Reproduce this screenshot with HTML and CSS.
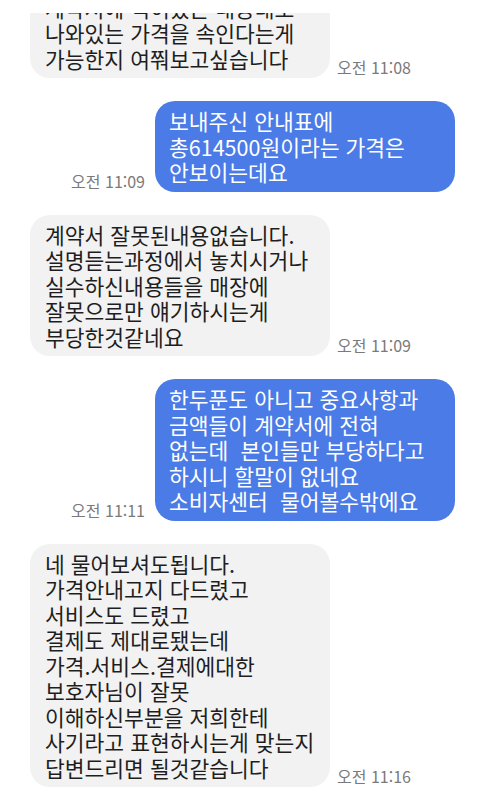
FILE: index.html
```html
<!DOCTYPE html>
<html lang="ko">
<head>
    <meta charset="UTF-8">
    <meta name="viewport" content="width=device-width, initial-scale=1.0">
    <title>메시지</title>
    <link rel="stylesheet" href="styles.css">
</head>
<body>
    <div class="topbar"></div>

    <div class="chat">
        <div class="list">
            <div class="row in">
                <div class="bubble">게시되어있는 사이트 메뉴에도<br>계약서에 적혀있는 내용대로<br>나와있는 가격을 속인다는게<br>가능한지 여쭤보고싶습니다</div>
                <div class="time">오전 11:08</div>
            </div>

            <div class="row out">
                <div class="time">오전 11:09</div>
                <div class="bubble">보내주신 안내표에<br>총614500원이라는 가격은<br>안보이는데요</div>
            </div>

            <div class="row in">
                <div class="bubble">계약서 잘못된내용없습니다.<br>설명듣는과정에서 놓치시거나<br>실수하신내용들을 매장에<br>잘못으로만 얘기하시는게<br>부당한것같네요</div>
                <div class="time">오전 11:09</div>
            </div>

            <div class="row out">
                <div class="time">오전 11:11</div>
                <div class="bubble">한두푼도 아니고 중요사항과<br>금액들이 계약서에 전혀<br>없는데&nbsp; 본인들만 부당하다고<br>하시니 할말이 없네요<br>소비자센터&nbsp; 물어볼수밖에요</div>
            </div>

            <div class="row in">
                <div class="bubble">네 물어보셔도됩니다.<br>가격안내고지 다드렸고<br>서비스도 드렸고<br>결제도 제대로됐는데<br>가격.서비스.결제에대한<br>보호자님이 잘못<br>이해하신부분을 저희한테<br>사기라고 표현하시는게 맞는지<br>답변드리면 될것같습니다</div>
                <div class="time">오전 11:16</div>
            </div>
        </div>
    </div>
</body>
</html>
```

FILE: styles.css
```css
* {
    box-sizing: border-box;
}

body {
    margin: 0;
    background: #ffffff;
    font-family: "Noto Sans CJK KR", "Noto Sans", sans-serif;
    height: 804px;
    overflow: hidden;
}

.topbar {
    height: 13px;
    background: #ffffff;
}

.chat {
    height: 791px;
    overflow: hidden;
}

.list {
    margin-top: -51px;
    padding: 0 25px 0 30px;
    display: flex;
    flex-direction: column;
    gap: 23px;
}

.row {
    display: flex;
    align-items: flex-end;
    gap: 7px;
}

.row.out {
    justify-content: flex-end;
    gap: 10px;
}

.bubble {
    width: 300px;
    padding: 7px 14px;
    border-radius: 20px;
    font-size: 21.5px;
    line-height: 25.5px;
    white-space: nowrap;
}

.in .bubble {
    background: #f2f2f2;
    color: #1e1e1e;
    padding-left: 15px;
}

.out .bubble {
    background: #4a7be6;
    color: #ffffff;
}

.time {
    font-size: 16px;
    line-height: 18px;
    color: #7a7a7a;
    margin-bottom: 2px;
    white-space: nowrap;
}
```
